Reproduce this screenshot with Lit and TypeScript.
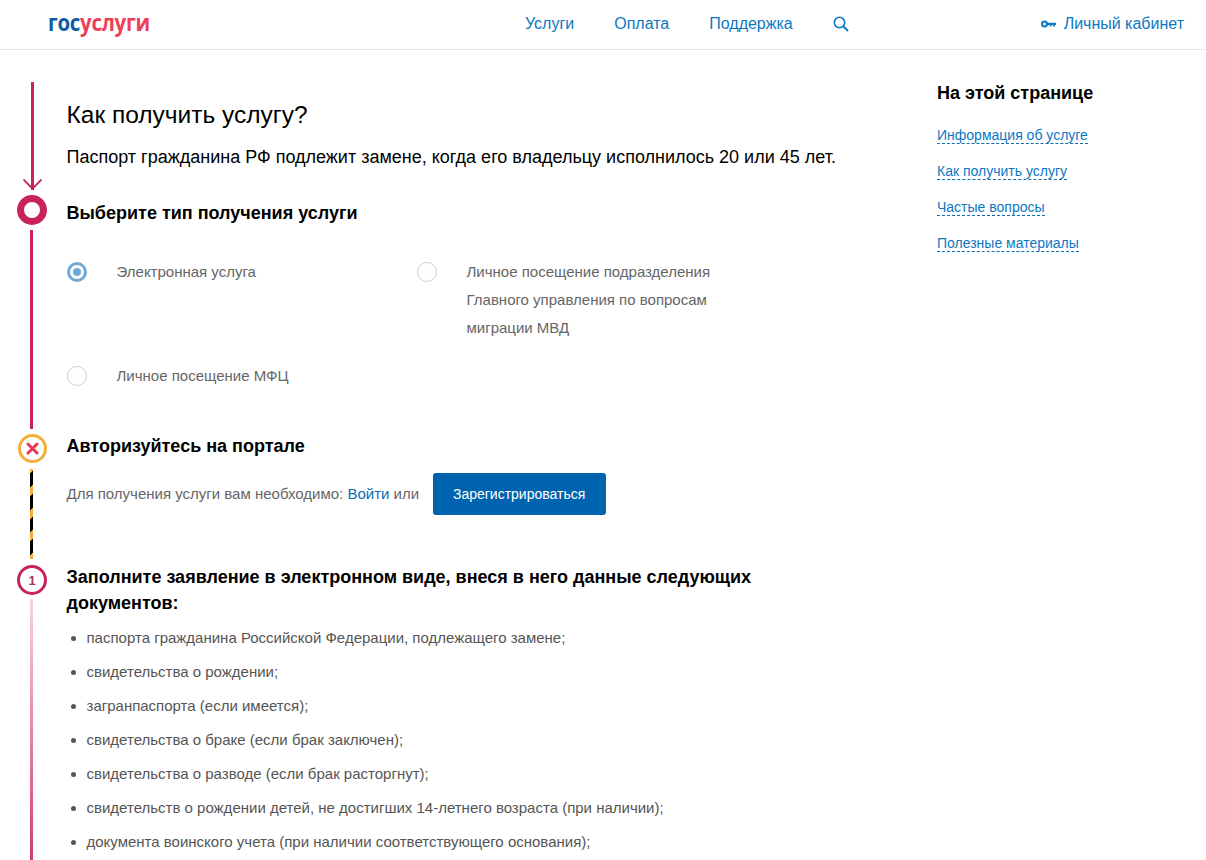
import { LitElement, html, css } from "lit";
import { customElement } from "lit/decorators.js";

const DOCS = [
  "паспорта гражданина Российской Федерации, подлежащего замене;",
  "свидетельства о рождении;",
  "загранпаспорта (если имеется);",
  "свидетельства о браке (если брак заключен);",
  "свидетельства о разводе (если брак расторгнут);",
  "свидетельств о рождении детей, не достигших 14-летнего возраста (при наличии);",
  "документа воинского учета (при наличии соответствующего основания);",
];
const TOC = ["Информация об услуге", "Как получить услугу", "Частые вопросы", "Полезные материалы"];

@customElement("app-root")
export class AppRoot extends LitElement {
  static styles = css`
    :host {
      display: block;
      height: 860px;
      overflow: hidden;
      background: #fff;
      font-family: "Liberation Sans", Arial, sans-serif;
      color: #000;
    }
    a { text-decoration: none; color: inherit; }
    .header {
      border-bottom: 1px solid #e8e8e8;
      display: flex;
      align-items: center;
      padding-bottom: 2px;
      height: 47px;
      color: #0c78c2;
      font-size: 16px;
    }
    .logo {
      margin-left: 48px;
      margin-bottom: 4px;
      width: 477px;
      font-family: "Open Sans", sans-serif;
      font-weight: 700;
      font-size: 24px;
      letter-spacing: -0.3px;
      line-height: 24px;
      color: #ee3f58;
    }
    .logo span { display: inline-block; transform: scaleX(0.85); transform-origin: left center; white-space: nowrap; }
    .logo b { color: #0d5ba6; font-weight: 700; }
    .nav { display: flex; align-items: center; gap: 40px; }
    .nav svg { display: block; }
    .account { margin-left: auto; margin-right: 22px; display: flex; align-items: center; gap: 8px; }
    .body { display: flex; height: 810px; }
    .main { width: 937px; padding-top: 32px; display: flex; flex-direction: column; height: 778px; }
    .side { padding-top: 32px; }
    .side h3 { margin: 0 0 23px; font-size: 18px; line-height: 22px; font-weight: 700; }
    .toc { display: flex; flex-direction: column; gap: 19px; align-items: flex-start; }
    .toc a {
      font-size: 14px;
      line-height: 16px;
      color: #0c78c2;
      border-bottom: 1px dashed #0c6fb8;
    }
    .step { display: flex; flex: none; }
    .rail { width: 66.5px; flex: none; display: flex; flex-direction: column; align-items: flex-start; }
    .content { flex: 1; min-width: 0; }

    .s0 { height: 113px; }
    .s1 { height: 239px; }
    .s2 { height: 131px; }
    .s3 { flex: 1; }

    .line-top { width: 3px; margin-left: 31px; flex: 1; background: #c8235a; }
    .arrow { display: block; margin-left: 23px; margin-top: -11px; margin-bottom: 5px; }
    h1 { margin: 17px 0 0; font-size: 24.5px; line-height: 32px; font-weight: 400; }
    .lead { margin: 13px 0 0; font-size: 18px; line-height: 26px; }
    h2 { margin: 0; font-size: 18px; line-height: 26px; font-weight: 700; width: 730px; }
    .s1 h2 { margin-top: 5px; }
    .s2 h2, .s3 h2 { margin-top: -1px; }

    .dot { width: 30px; height: 30px; box-sizing: border-box; border-radius: 50%; margin-left: 17px; flex: none; }
    .dot.active { border: 7.5px solid #c8235a; }
    .dot.warn {
      width: 29px; height: 29px; margin-left: 17.5px;
      border: 3px solid #f5ad3b;
      display: flex; align-items: center; justify-content: center;
    }
    .dot.num {
      border: 3px solid #c8235a;
      display: flex; align-items: center; justify-content: center;
      padding-top: 1px;
      font-size: 13px; font-weight: 700; color: #a8375f;
    }
    .line { width: 3px; margin-left: 30px; flex: 1; }
    .line.solid { margin-top: 5px; margin-bottom: 5px; background: #c8235a; }
    .line.striped {
      margin-top: 6px; margin-bottom: 6px;
      background: repeating-linear-gradient(135deg, #f5ad3b 0 3.5px, #000 3.5px 13px, #f5ad3b 13px 16px);
    }
    .line.fade { margin-top: 4px; background: linear-gradient(#f7d3df, #d23c70); }

    .radios {
      display: grid;
      grid-template-columns: 350px 350px;
      row-gap: 20px;
      margin-top: 32px;
      font-size: 15px;
      line-height: 28px;
      color: #666;
    }
    .radio { display: flex; gap: 30px; align-items: flex-start; padding-right: 40px; }
    .mark { width: 20px; height: 20px; box-sizing: border-box; border: 1px solid #ccc; border-radius: 50%; margin: 4px -0.5px 0 0.5px; flex: none; }
    .mark.on { border: 3px solid #6fa9d8; display: flex; align-items: center; justify-content: center; }
    .mark.on::after { content: ""; width: 8px; height: 8px; border-radius: 50%; background: #6fa9d8; }

    .auth { display: flex; align-items: center; margin-top: 14px; font-size: 15px; color: #666; }
    .auth .txt { margin-bottom: 2px; }
    .auth a { color: #0b6cb5; }
    .auth .btn {
      margin-left: 13.5px;
      height: 42px;
      width: 173px;
      border-radius: 3px;
      background: #0063b0;
      color: #fff;
      display: flex;
      align-items: center;
      justify-content: center;
      font-size: 14px;
    }
    .docs { list-style: none; margin: 5px 0 0; padding: 0 0 0 20px; font-size: 15px; line-height: 34px; color: #555; }
    .docs li { position: relative; }
    .docs li::before {
      content: ""; position: absolute; left: -15.5px; top: 15px;
      width: 5px; height: 5px; border-radius: 50%; background: #555;
    }
  `;

  render() {
    return html`
      <header class="header">
        <div class="logo"><span><b>гос</b>услуги</span></div>
        <nav class="nav">
          <a>Услуги</a><a>Оплата</a><a>Поддержка</a>
          <svg width="16" height="16" viewBox="0 0 16 16" fill="none" stroke="#0c78c2" stroke-width="1.6">
            <circle cx="6.5" cy="6.5" r="5.2"></circle>
            <path d="M10.4 10.4 L15 15" stroke-width="2"></path>
          </svg>
        </nav>
        <a class="account">
          <svg width="15" height="8" viewBox="0 0 15 8" fill="none">
            <circle cx="3.5" cy="4" r="2.5" stroke="#0c78c2" stroke-width="2"></circle>
            <path d="M5.5 2.8h9.5v2.2h-1.2v1.6h-1.8V5H10.6v1.6H8.8V5H5.5z" fill="#0c78c2"></path>
          </svg>
          Личный кабинет
        </a>
      </header>
      <div class="body">
        <main class="main">
          <section class="step s0">
            <div class="rail">
              <div class="line-top"></div>
              <svg class="arrow" width="19" height="11" viewBox="0 0 19 11" fill="none" stroke="#c8235a" stroke-width="1.8">
                <path d="M0.5 0.5 L9.5 9.6 L18.5 0.5"></path>
              </svg>
            </div>
            <div class="content">
              <h1>Как получить услугу?</h1>
              <p class="lead">Паспорт гражданина РФ подлежит замене, когда его владельцу исполнилось 20 или 45 лет.</p>
            </div>
          </section>
          <section class="step s1">
            <div class="rail">
              <div class="dot active"></div>
              <div class="line solid"></div>
            </div>
            <div class="content">
              <h2>Выберите тип получения услуги</h2>
              <div class="radios">
                <div class="radio"><span class="mark on"></span><span>Электронная услуга</span></div>
                <div class="radio"><span class="mark"></span><span>Личное посещение подразделения Главного управления по вопросам миграции МВД</span></div>
                <div class="radio"><span class="mark"></span><span>Личное посещение МФЦ</span></div>
              </div>
            </div>
          </section>
          <section class="step s2">
            <div class="rail">
              <div class="dot warn">
                <svg width="13" height="13" viewBox="0 0 13 13" stroke="#e8395c" stroke-width="3" stroke-linecap="round">
                  <path d="M2 2 L11 11 M11 2 L2 11"></path>
                </svg>
              </div>
              <div class="line striped"></div>
            </div>
            <div class="content">
              <h2>Авторизуйтесь на портале</h2>
              <div class="auth">
                <span class="txt">Для получения услуги вам необходимо:&nbsp;<a>Войти</a> или</span>
                <a class="btn">Зарегистрироваться</a>
              </div>
            </div>
          </section>
          <section class="step s3">
            <div class="rail">
              <div class="dot num">1</div>
              <div class="line fade"></div>
            </div>
            <div class="content">
              <h2>Заполните заявление в электронном виде, внеся в него данные следующих документов:</h2>
              <ul class="docs">${DOCS.map((d) => html`<li>${d}</li>`)}</ul>
            </div>
          </section>
        </main>
        <aside class="side">
          <h3>На этой странице</h3>
          <div class="toc">${TOC.map((t) => html`<a>${t}</a>`)}</div>
        </aside>
      </div>
    `;
  }
}
